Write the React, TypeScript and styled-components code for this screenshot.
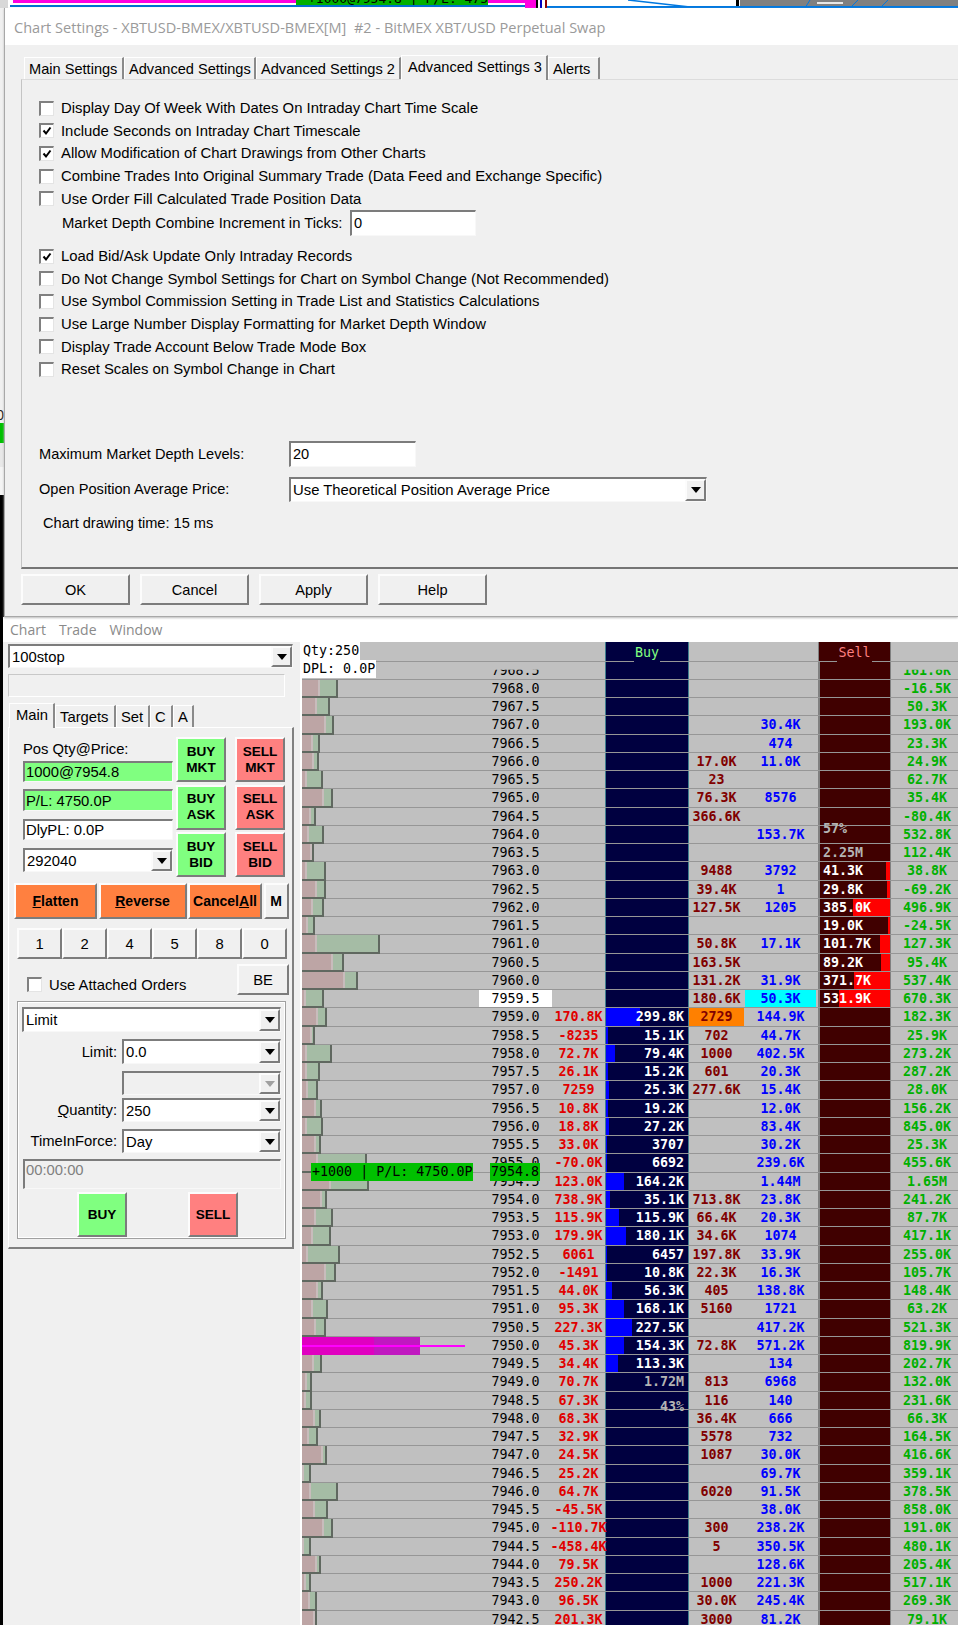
import React from "react";
import styled, { createGlobalStyle } from "styled-components";

const Global = createGlobalStyle`
  html, body { margin: 0; padding: 0; background: #fff; }
  * { box-sizing: border-box; }
  body { font-family: "Liberation Sans", Arial, sans-serif; font-size: 14.6px; color: #000; }
`;

const raised = `
  background: #f0f0f0;
  border-top: 2px solid #fcfcfc;
  border-left: 2px solid #fcfcfc;
  border-right: 2px solid #7c7c7c;
  border-bottom: 2px solid #7c7c7c;
`;
const sunken = `
  background: #fff;
  border-top: 2px solid #7c7c7c;
  border-left: 2px solid #7c7c7c;
  border-right: 1px solid #f8f8f8;
  border-bottom: 1px solid #f8f8f8;
`;

const Page = styled.div`
  width: 958px;
  height: 1625px;
  overflow: hidden;
  background: #fff;
`;
const TopStrip = styled.svg`
  display: block;
  width: 958px;
  height: 8px;
`;
const DialogRow = styled.div`
  display: flex;
  height: 609px;
`;
const Gutter = styled.div`
  width: 4px;
  display: flex;
  flex-direction: column;
  flex: none;
  overflow: hidden;
`;
const GutterSeg = styled.div<{ $h: number; $bg: string }>`
  height: ${(p) => p.$h}px;
  background: ${(p) => p.$bg};
  display: flex;
  align-items: flex-end;
  justify-content: flex-end;
  font-size: 14px;
  line-height: 16px;
  color: #222;
`;
const Dialog = styled.div`
  flex: 1;
  min-width: 0;
  background: #f0f0f0;
  border-left: 1px solid #a8a8a8;
  border-bottom: 1px solid #a8a8a8;
  box-shadow: 0 1px 2px #bbb;
  display: flex;
  flex-direction: column;
`;
const TitleBar = styled.div`
  height: 37px;
  background: #fff;
  display: flex;
  align-items: center;
  padding-left: 9px;
  font-family: "Open Sans", sans-serif;
  font-size: 14.55px;
  color: #9a9a9a;
  white-space: pre;
`;
const DialogBody = styled.div`
  padding: 10px 0 0 16px;
`;
const TabStrip = styled.div`
  display: flex;
  align-items: flex-end;
  height: 24px;
  padding-left: 3px;
`;
const Tab = styled.div<{ $w: number; $on?: boolean; $h?: number }>`
  width: ${(p) => p.$w}px;
  height: ${(p) => p.$h ?? (p.$on ? 25 : 22)}px;
  margin-bottom: ${(p) => (p.$on ? -1 : 0)}px;
  background: #f0f0f0;
  border-top: 1px solid #fff;
  border-left: 1px solid #fff;
  border-right: 2px solid #8a8a8a;
  display: flex;
  align-items: ${(p) => (p.$on ? "flex-start" : "center")};
  padding: ${(p) => (p.$on ? "3px 0 0 6px" : "0 0 0 4px")};
  white-space: nowrap;
  position: relative;
  z-index: ${(p) => (p.$on ? 1 : 0)};
`;
const Panel = styled.div`
  height: 490px;
  border-top: 1px solid #dcdcdc;
  border-left: 1px solid #c4c4c4;
  border-bottom: 2px solid #757575;
  padding: 17px 0 0 17px;
  display: flex;
  flex-direction: column;
`;
const CheckGroup = styled.div<{ $top?: number }>`
  margin-top: ${(p) => p.$top ?? 0}px;
  display: flex;
  flex-direction: column;
`;
const CheckRow = styled.label`
  height: 22.6px;
  display: flex;
  align-items: center;
  gap: 7px;
  white-space: nowrap;
  font-size: 14.85px;
`;
const Box = styled.span`
  width: 15px;
  height: 15px;
  flex: none;
  background: #fff;
  border-top: 2px solid #808080;
  border-left: 2px solid #808080;
  border-right: 1px solid #e4e4e4;
  border-bottom: 1px solid #e4e4e4;
  display: flex;
  align-items: center;
  justify-content: center;
`;
const FormRow = styled.div<{ $label: number; $top?: number; $pad?: number }>`
  display: grid;
  grid-template-columns: ${(p) => p.$label}px max-content;
  align-items: center;
  margin-top: ${(p) => p.$top ?? 0}px;
  padding-left: ${(p) => p.$pad ?? 0}px;
`;
const WideLabel = styled.span`
  font-size: 14.85px;
`;
const TextBox = styled.div<{ $w: number; $h: number }>`
  ${sunken}
  width: ${(p) => p.$w}px;
  height: ${(p) => p.$h}px;
  display: flex;
  align-items: center;
  padding-left: 2px;
`;
const Note = styled.div`
  margin: 13px 0 0 4px;
  line-height: 17px;
`;
const ButtonBar = styled.div`
  display: flex;
  gap: 10px;
  margin-top: 5px;
`;
const DialogButton = styled.div`
  ${raised}
  width: 109px;
  height: 31px;
  display: flex;
  align-items: center;
  justify-content: center;
`;
const Combo = styled.div<{ $w: number; $h?: number; $off?: boolean; $top?: number }>`
  ${sunken}
  width: ${(p) => p.$w}px;
  height: ${(p) => p.$h ?? 24}px;
  margin-top: ${(p) => p.$top ?? 0}px;
  background: ${(p) => (p.$off ? "#f0f0f0" : "#fff")};
  display: flex;
  align-items: center;
  justify-content: space-between;
  padding-left: 2px;
`;
const Arrow = styled.span<{ $off?: boolean }>`
  ${raised}
  width: 21px;
  height: 100%;
  flex: none;
  display: flex;
  align-items: center;
  justify-content: center;
  &::after {
    content: "";
    border-left: 5px solid transparent;
    border-right: 5px solid transparent;
    border-top: 6px solid ${(p) => (p.$off ? "#a0a0a0" : "#000")};
  }
`;
const Lower = styled.div`
  border-left: 3px solid #000;
  height: 1008px;
  background: #fff;
`;
const MenuBar = styled.div`
  height: 25px;
  display: flex;
  align-items: center;
  padding: 0 0 0 7px;
  gap: 13px;
  font-family: "Open Sans", sans-serif;
  font-size: 14px;
  color: #8a8a8a;
`;
const Main = styled.div`
  display: flex;
  height: 983px;
`;
const SidePanel = styled.div`
  width: 297px;
  flex: none;
  background: #f0f0f0;
  padding: 2px 0 0 5px;
  font-size: 14.8px;
`;
const ReadBox = styled.div`
  width: 277px;
  height: 23px;
  margin-top: 6px;
  background: #f0f0f0;
  border: 1px solid #c8c8c8;
  border-right-color: #fff;
  border-bottom-color: #fff;
`;
const SideTabs = styled.div`
  display: flex;
  align-items: flex-end;
  height: 25px;
  margin: 5px 0 0 1px;
`;
const SidePane = styled.div`
  width: 286px;
  height: 522px;
  border-top: 1px solid #fff;
  border-left: 1px solid #fff;
  border-right: 2px solid #808080;
  border-bottom: 2px solid #808080;
  padding-top: 9px;
`;
const TopBlock = styled.div`
  display: flex;
  padding-left: 14px;
`;
const FieldColumn = styled.div`
  width: 150px;
  margin-right: 3px;
  display: flex;
  flex-direction: column;
`;
const PosLabel = styled.div`
  height: 24px;
  display: flex;
  align-items: center;
`;
const StatusBox = styled.div<{ $bg?: string; $h: number; $top?: number }>`
  ${sunken}
  height: ${(p) => p.$h}px;
  margin-top: ${(p) => p.$top ?? 0}px;
  background: ${(p) => p.$bg ?? "#fff"};
  display: flex;
  align-items: center;
  padding-left: 1px;
`;
const TradeColumn = styled.div<{ $gap?: number }>`
  display: flex;
  flex-direction: column;
  gap: 2.5px;
  margin-left: ${(p) => p.$gap ?? 0}px;
`;
const TradeButton = styled.div<{ $bg: string }>`
  ${raised}
  background: ${(p) => p.$bg};
  width: 50px;
  height: 45px;
  display: flex;
  align-items: center;
  justify-content: center;
  text-align: center;
  font-weight: bold;
  font-size: 13.6px;
  line-height: 16px;
`;
const ActionRow = styled.div`
  display: grid;
  grid-template-columns: 83px 88px 74px 25px;
  column-gap: 1.5px;
  margin: 6px 0 0 5px;
  height: 36px;
`;
const ActionButton = styled.div<{ $plain?: boolean }>`
  ${raised}
  background: ${(p) => (p.$plain ? "#f0f0f0" : "#ff8040")};
  display: flex;
  align-items: center;
  justify-content: center;
  font-weight: bold;
  font-size: 14px;
  white-space: nowrap;
`;
const NumberRow = styled.div`
  display: grid;
  grid-template-columns: repeat(6, 45px);
  margin: 9px 0 0 8px;
  height: 31px;
`;
const NumberButton = styled.div`
  ${raised}
  display: flex;
  align-items: center;
  justify-content: center;
`;
const AttachRow = styled.div`
  display: flex;
  height: 31px;
  margin: 5px 3px 0 18px;
`;
const AttachLabel = styled.label`
  display: flex;
  align-items: center;
  gap: 7px;
  height: 15px;
  margin-top: 13px;
  white-space: nowrap;
`;
const BeButton = styled.div`
  ${raised}
  width: 52px;
  height: 31px;
  margin-left: auto;
  display: flex;
  align-items: center;
  justify-content: center;
`;
const OrderGroup = styled.div`
  width: 269px;
  height: 238px;
  margin: 6px 0 0 8px;
  border: 1px solid #a0a0a0;
  box-shadow: 0 0 0 1px #fff inset;
  padding: 5px 4px 0 4px;
  display: flex;
  flex-direction: column;
`;
const OrderRow = styled.div<{ $top: number }>`
  display: grid;
  grid-template-columns: 95px 159px;
  column-gap: 5px;
  align-items: center;
  margin-top: ${(p) => p.$top}px;
`;
const OrderLabel = styled.div`
  text-align: right;
`;
const TimeBox = styled.div`
  ${sunken}
  background: #f0f0f0;
  color: #808080;
  width: 258px;
  height: 30px;
  margin: 6px 0 0 1px;
  padding: 1px 0 0 1px;
`;
const OrderButtons = styled.div`
  display: flex;
  gap: 61px;
  margin: 3px 0 0 55px;
`;
const Chart = styled.div`
  position: relative;
  margin-left: 2px;
  flex: 1;
  min-width: 0;
  background: #c0c0c0;
  overflow: hidden;
  font-family: "DejaVu Sans Mono", monospace;
  font-size: 13.33px;
`;
const Columns = `
  display: grid;
  grid-template-columns: 177px 73px 53px 84px 56px 73px 73px 67px;
`;
const HeadRow = styled.div`
  ${Columns}
  height: 19.5px;
  border-bottom: 1px solid #969696;
`;
const HeadCell = styled.div<{ $bg?: string; $left?: string; $right?: string }>`
  background: ${(p) => p.$bg ?? "transparent"};
  border-left: ${(p) => (p.$left ? `1px solid ${p.$left}` : "none")};
  border-right: ${(p) => (p.$right ? `1px solid ${p.$right}` : "none")};
  display: flex;
  justify-content: center;
  align-items: flex-end;
`;
const HeadLabel = styled.span<{ $bg: string; $c: string }>`
  background: ${(p) => p.$bg};
  color: ${(p) => p.$c};
  padding: 0 1px;
  line-height: 19px;
  margin-bottom: -1px;
  height: 19px;
  position: relative;
`;
const Corner = styled.div<{ $top: number }>`
  position: absolute;
  left: 0;
  top: ${(p) => p.$top}px;
  height: 18px;
  line-height: 17px;
  padding: 0 1px;
  background: #fff;
  white-space: pre;
  z-index: 3;
`;
const Row = styled.div`
  ${Columns}
  height: 18.25px;
  border-bottom: 1px solid #969696;
`;
const Cell = styled.div<{ $c?: string; $bg?: string; $bold?: boolean; $align?: string; $pad?: string; $mr?: number; $left?: string; $right?: string }>`
  position: relative;
  color: ${(p) => p.$c ?? "#000"};
  background: ${(p) => p.$bg ?? "transparent"};
  font-weight: ${(p) => (p.$bold ? "bold" : "normal")};
  display: flex;
  align-items: center;
  justify-content: ${(p) => p.$align ?? "center"};
  padding: ${(p) => p.$pad ?? "0"};
  margin-right: ${(p) => p.$mr ?? 0}px;
  border-left: ${(p) => (p.$left ? `${p.$left}` : "none")};
  border-right: ${(p) => (p.$right ? `${p.$right}` : "none")};
  white-space: nowrap;
  min-width: 0;
`;
const CellText = styled.span<{ $clip?: boolean; $shift?: number; $grey?: boolean }>`
  position: relative;
  z-index: 1;
  clip-path: ${(p) => (p.$clip ? "inset(7px 0 0 0)" : "none")};
  transform: translateY(${(p) => p.$shift ?? 0}px);
  color: ${(p) => (p.$grey ? "#b4b4b4" : "inherit")};
`;
const Fill = styled.div<{ $c: string; $side: "left" | "right" }>`
  position: absolute;
  top: 0;
  bottom: 0;
  ${(p) => p.$side}: 0;
  background: ${(p) => p.$c};
`;
const Bar = styled.div`
  height: calc(100% + 1px);
  display: flex;
  border-right: 2px solid #606860;
  border-bottom: 2px solid #606860;
`;
const BarPink = styled.div`
  background: #bda5a5;
  border-right: 2px solid #c8bcbc;
  flex: none;
`;
const BarGreen = styled.div`
  background: #a5bca5;
  flex: 1;
  min-width: 0;
`;
const POCBar = styled.div`
  height: calc(100% + 1px);
  display: flex;
  width: 118px;
  background: #c018c0;
`;
const POCPart = styled.div`
  width: 72px;
  background: #e000c0;
`;
const POCLine = styled.div`
  position: absolute;
  left: -2px;
  top: 8px;
  width: 165px;
  height: 2px;
  background: #ff00ff;
`;
const CellInner = styled.div`
  width: 100%;
  height: 100%;
  display: flex;
  justify-content: flex-start;
`;
const PositionTag = styled.div<{ $left: number; $w: number }>`
  position: absolute;
  top: 521px;
  left: ${(p) => p.$left}px;
  width: ${(p) => p.$w}px;
  height: 18px;
  line-height: 18px;
  background: #00c000;
  color: #000;
  padding-left: 1px;
  white-space: pre;
  z-index: 4;
`;

const RAW = `7968.5||||||161.8K|0|0
7968.0||||||-16.5K|18|36
7967.5||||||50.3K|15|28
7967.0||||30.4K||193.0K|24|32
7966.5||||474||23.3K|11|18
7966.0|||17.0K|11.0K||24.9K|12|17
7965.5|||23|||62.7K|5|21
7965.0|||76.3K|8576||35.4K|22|31
7964.5|||366.6K|||-80.4K|9|14
7964.0||||153.7K|57%|532.8K|7|22
7963.5|||||2.25M|112.4K|10|12
7963.0|||9488|3792|41.3K|38.8K|5|24|0|4
7962.5|||39.4K|1|29.8K|-69.2K|15|24|0|3
7962.0|||127.5K|1205|385.0K|496.9K|11|22|0|37
7961.5|||||19.0K|-24.5K|6|13|0|2
7961.0|||50.8K|17.1K|101.7K|127.3K|15|78|0|10
7960.5|||163.5K||89.2K|95.4K|31|42|0|9
7960.0|||131.2K|31.9K|371.7K|537.4K|43|56|0|36
7959.5|||180.6K|50.3K|531.9K|670.3K|4|22|0|51
7959.0|170.8K|299.8K|2729|144.9K||182.3K|16|25|34
7958.5|-8235|15.1K|702|44.7K||25.9K|10|13|2
7958.0|72.7K|79.4K|1000|402.5K||273.2K|5|30|9
7957.5|26.1K|15.2K|601|20.3K||287.2K|5|18|2
7957.0|7259|25.3K|277.6K|15.4K||28.0K|6|16|3
7956.5|10.8K|19.2K||12.0K||156.2K|14|20|2
7956.0|18.8K|27.2K||83.4K||845.0K|5|21|3
7955.5|33.0K|3707||30.2K||25.3K|14|19|1
7955.0|-70.0K|6692||239.6K||455.6K|16|65|1
7954.5|123.0K|164.2K||1.44M||1.65M|29|67|18
7954.0|738.9K|35.1K|713.8K|23.8K||241.2K|20|25|4
7953.5|115.9K|115.9K|66.4K|20.3K||87.7K|14|31|13
7953.0|179.9K|180.1K|34.6K|1074||417.1K|11|29|20
7952.5|6061|6457|197.8K|33.9K||255.0K|6|38|1
7952.0|-1491|10.8K|22.3K|16.3K||105.7K|24|34|1
7951.5|44.0K|56.3K|405|138.8K||148.4K|16|21|6
7951.0|95.3K|168.1K|5160|1721||63.2K|11|26|18
7950.5|227.3K|227.5K||417.2K||521.3K|14|24|26
7950.0|45.3K|154.3K|72.8K|571.2K||819.9K|72|118|18
7949.5|34.4K|113.3K||134||202.7K|12|20|12
7949.0|70.7K|1.72M|813|6968||132.0K|5|10
7948.5|67.3K|43%|116|140||231.6K|4|10
7948.0|68.3K||36.4K|666||66.3K|13|19
7947.5|32.9K||5578|732||164.5K|7|16
7947.0|24.5K||1087|30.0K||416.6K|21|25
7946.5|25.2K|||69.7K||359.1K|2|9
7946.0|64.7K||6020|91.5K||378.5K|9|36
7945.5|-45.5K|||38.0K||858.0K|13|26
7945.0|-110.7K||300|238.2K||191.0K|22|31
7944.5|-458.4K||5|350.5K||480.1K|1|9
7944.0|79.5K|||128.6K||205.4K|15|19
7943.5|250.2K||1000|221.3K||517.1K|4|9
7943.0|96.5K||30.0K|245.4K||269.3K|8|15
7942.5|201.3K||3000|81.2K||79.1K|13|15`;

const ROWS = RAW.split("\n").map((l) => {
  const f = l.split("|");
  return {
    price: f[0], red: f[1], buy: f[2], dark: f[3], blue: f[4], sell: f[5], green: f[6],
    pink: +f[7], total: +f[8], buyFill: +(f[9] || 0), sellFill: +(f[10] || 0),
  };
});

const Check = ({ on }: { on?: boolean }) => (
  <Box>
    {on && (
      <svg width="10" height="10" viewBox="0 0 10 10">
        <path d="M1.5 4.5 L4 7.5 L8.5 1.5" fill="none" stroke="#000" strokeWidth="2" />
      </svg>
    )}
  </Box>
);

const CheckLine = ({ on, children }: { on?: boolean; children: React.ReactNode }) => (
  <CheckRow>
    <Check on={on} />
    {children}
  </CheckRow>
);

const LADDER_NAVY = "#000040";
const LADDER_MAROON = "#400000";
const EDGE_BUY = "1px solid #3f7f8f";
const EDGE_SELL = "2px solid #808080";

const LadderRow = ({ r, i }: { r: (typeof ROWS)[number]; i: number }) => {
  const isPoc = r.price === "7950.0";
  const isLast = r.price === "7959.5";
  const greySell = r.sell === "57%" || r.sell === "2.25M";
  const greyBuy = r.buy === "1.72M" || r.buy === "43%";
  return (
    <Row>
      <Cell>
        <CellInner>
          {isPoc ? (
            <POCBar>
              <POCPart />
              <POCLine />
            </POCBar>
          ) : r.total > 0 ? (
            <Bar style={{ width: r.total }}>
              <BarPink style={{ width: r.pink }} />
              <BarGreen />
            </Bar>
          ) : null}
        </CellInner>
      </Cell>
      <Cell $bg={isLast ? "#fff" : undefined}>
        <CellText $clip={i === 0}>{r.price}</CellText>
      </Cell>
      <Cell $c="#e00000" $bold>
        <CellText>{r.red}</CellText>
      </Cell>
      <Cell $c="#fff" $bold $bg={LADDER_NAVY} $align="flex-end" $pad="0 4px 0 0" $left={EDGE_BUY} $right={EDGE_BUY}>
        {r.buyFill > 0 && <Fill $c="#0000ff" $side="left" style={{ width: r.buyFill }} />}
        <CellText $grey={greyBuy} $shift={r.buy === "43%" ? 6 : 0}>{r.buy}</CellText>
      </Cell>
      <Cell $c="#800000" $bold $bg={r.dark === "2729" ? "#ff8000" : undefined} $mr={1}>
        <CellText>{r.dark}</CellText>
      </Cell>
      <Cell $c="#0000ff" $bold $bg={isLast ? "#00ffff" : undefined} $mr={2}>
        <CellText>{r.blue}</CellText>
      </Cell>
      <Cell $c="#fff" $bold $bg={LADDER_MAROON} $align="flex-start" $pad="0 0 0 3px" $left={EDGE_SELL} $right="1px solid #808080">
        {r.sellFill > 0 && <Fill $c="#ff0000" $side="right" style={{ width: r.sellFill }} />}
        <CellText $grey={greySell} $shift={r.sell === "57%" ? -6 : 0}>{r.sell}</CellText>
      </Cell>
      <Cell $c="#00b000" $bold $pad="0 0 0 5px">
        <CellText $clip={i === 0}>{r.green}</CellText>
      </Cell>
    </Row>
  );
};

export default function App() {
  return (
    <Page>
      <Global />
      <TopStrip viewBox="0 0 958 8">
        <rect width="958" height="8" fill="#fff" />
        <rect x="0" width="8" height="8" fill="#d8d8d8" />
        <rect x="13" width="283" height="3" fill="#ff00e0" />
        <rect x="296" width="192" height="6" fill="#00b000" />
        <text x="308" y="3" fontFamily="DejaVu Sans Mono" fontSize="13" fill="#000">+1000@7954.8 | P/L: 4750.0P</text>
        <rect x="488" width="37" height="3" fill="#ff00e0" />
        <rect x="10" y="5" width="515" height="2" fill="#0070d0" />
        <rect x="525" width="12" height="8" fill="#ff00e0" />
        <rect x="536" width="2" height="8" fill="#000" />
        <rect x="540" width="2" height="8" fill="#0000c0" />
        <rect x="545" width="2" height="8" fill="#900000" />
        <rect x="740" width="218" height="7" fill="#808080" />
        <rect x="736" width="3" height="8" fill="#000" />
        <rect x="547" y="6" width="411" height="2" fill="#0078e0" />
        <path d="M628 0 L690 7" stroke="#0078e0" strokeWidth="1.5" fill="none" />
        <path d="M805 8 L810 0 M850 8 L858 0 M880 8 L888 0" stroke="#0078e0" strokeWidth="1" fill="none" />
        <rect x="817" y="2" width="26" height="2" fill="#e8e8e8" />
      </TopStrip>
      <DialogRow>
        <Gutter>
          <GutterSeg $h={415} $bg="#f0f0f0">0</GutterSeg>
          <GutterSeg $h={20} $bg="#00c000" />
          <GutterSeg $h={24} $bg="#e8e8e8" />
          <GutterSeg $h={28} $bg="#f4f4f4" />
          <GutterSeg $h={122} $bg="#000" />
        </Gutter>
        <Dialog>
          <TitleBar>Chart Settings - XBTUSD-BMEX/XBTUSD-BMEX[M]  #2 - BitMEX XBT/USD Perpetual Swap</TitleBar>
          <DialogBody>
            <TabStrip>
              <Tab $w={100}>Main Settings</Tab>
              <Tab $w={132}>Advanced Settings</Tab>
              <Tab $w={145}>Advanced Settings 2</Tab>
              <Tab $w={147} $on>Advanced Settings 3</Tab>
              <Tab $w={52}>Alerts</Tab>
            </TabStrip>
            <Panel>
              <CheckGroup>
                <CheckLine>Display Day Of Week With Dates On Intraday Chart Time Scale</CheckLine>
                <CheckLine on>Include Seconds on Intraday Chart Timescale</CheckLine>
                <CheckLine on>Allow Modification of Chart Drawings from Other Charts</CheckLine>
                <CheckLine>Combine Trades Into Original Summary Trade (Data Feed and Exchange Specific)</CheckLine>
                <CheckLine>Use Order Fill Calculated Trade Position Data</CheckLine>
              </CheckGroup>
              <FormRow $label={288} $pad={23}>
                <WideLabel>Market Depth Combine Increment in Ticks:</WideLabel>
                <TextBox $w={126} $h={26}>0</TextBox>
              </FormRow>
              <CheckGroup $top={9}>
                <CheckLine on>Load Bid/Ask Update Only Intraday Records</CheckLine>
                <CheckLine>Do Not Change Symbol Settings for Chart on Symbol Change (Not Recommended)</CheckLine>
                <CheckLine>Use Symbol Commission Setting in Trade List and Statistics Calculations</CheckLine>
                <CheckLine>Use Large Number Display Formatting for Market Depth Window</CheckLine>
                <CheckLine>Display Trade Account Below Trade Mode Box</CheckLine>
                <CheckLine>Reset Scales on Symbol Change in Chart</CheckLine>
              </CheckGroup>
              <FormRow $label={250} $top={60}>
                <span>Maximum Market Depth Levels:</span>
                <TextBox $w={127} $h={26}>20</TextBox>
              </FormRow>
              <FormRow $label={250} $top={10}>
                <span>Open Position Average Price:</span>
                <Combo $w={418} $h={25}>
                  <WideLabel>Use Theoretical Position Average Price</WideLabel>
                  <Arrow />
                </Combo>
              </FormRow>
              <Note>Chart drawing time: 15 ms</Note>
            </Panel>
            <ButtonBar>
              <DialogButton>OK</DialogButton>
              <DialogButton>Cancel</DialogButton>
              <DialogButton>Apply</DialogButton>
              <DialogButton>Help</DialogButton>
            </ButtonBar>
          </DialogBody>
        </Dialog>
      </DialogRow>
      <Lower>
        <MenuBar>
          <span>Chart</span>
          <span>Trade</span>
          <span>Window</span>
        </MenuBar>
        <Main>
          <SidePanel>
            <Combo $w={285}>
              <span>100stop</span>
              <Arrow />
            </Combo>
            <ReadBox />
            <SideTabs>
              <Tab $w={46} $on>Main</Tab>
              <Tab $w={61}>Targets</Tab>
              <Tab $w={34}>Set</Tab>
              <Tab $w={23}>C</Tab>
              <Tab $w={21}>A</Tab>
            </SideTabs>
            <SidePane>
              <TopBlock>
                <FieldColumn>
                  <PosLabel>Pos Qty@Price:</PosLabel>
                  <StatusBox $bg="#80ff80" $h={21}>1000@7954.8</StatusBox>
                  <StatusBox $bg="#80ff80" $h={22} $top={7}>P/L: 4750.0P</StatusBox>
                  <StatusBox $h={21} $top={8}>DlyPL: 0.0P</StatusBox>
                  <Combo $w={150} $top={8}>
                    <span>292040</span>
                    <Arrow />
                  </Combo>
                </FieldColumn>
                <TradeColumn>
                  <TradeButton $bg="#80ff80">BUY<br />MKT</TradeButton>
                  <TradeButton $bg="#80ff80">BUY<br />ASK</TradeButton>
                  <TradeButton $bg="#80ff80">BUY<br />BID</TradeButton>
                </TradeColumn>
                <TradeColumn $gap={9}>
                  <TradeButton $bg="#ff8080">SELL<br />MKT</TradeButton>
                  <TradeButton $bg="#ff8080">SELL<br />ASK</TradeButton>
                  <TradeButton $bg="#ff8080">SELL<br />BID</TradeButton>
                </TradeColumn>
              </TopBlock>
              <ActionRow>
                <ActionButton><u>F</u>latten</ActionButton>
                <ActionButton><u>R</u>everse</ActionButton>
                <ActionButton>Cancel<u>A</u>ll</ActionButton>
                <ActionButton $plain>M</ActionButton>
              </ActionRow>
              <NumberRow>
                {["1", "2", "4", "5", "8", "0"].map((n) => (
                  <NumberButton key={n}>{n}</NumberButton>
                ))}
              </NumberRow>
              <AttachRow>
                <AttachLabel>
                  <Check />
                  Use Attached Orders
                </AttachLabel>
                <BeButton>BE</BeButton>
              </AttachRow>
              <OrderGroup>
                <Combo $w={259} $h={25}>
                  <span>Limit</span>
                  <Arrow />
                </Combo>
                <OrderRow $top={7}>
                  <OrderLabel>Limit:</OrderLabel>
                  <Combo $w={159} $h={25}><span>0.0</span><Arrow /></Combo>
                </OrderRow>
                <OrderRow $top={7}>
                  <span />
                  <Combo $w={159} $off><span /><Arrow $off /></Combo>
                </OrderRow>
                <OrderRow $top={3}>
                  <OrderLabel><u>Q</u>uantity:</OrderLabel>
                  <Combo $w={159}><span>250</span><Arrow /></Combo>
                </OrderRow>
                <OrderRow $top={7}>
                  <OrderLabel>TimeInForce:</OrderLabel>
                  <Combo $w={159}><span>Day</span><Arrow /></Combo>
                </OrderRow>
                <TimeBox>00:00:00</TimeBox>
                <OrderButtons>
                  <TradeButton $bg="#80ff80">BUY</TradeButton>
                  <TradeButton $bg="#ff8080">SELL</TradeButton>
                </OrderButtons>
              </OrderGroup>
            </SidePane>
          </SidePanel>
          <Chart>
            <Corner $top={0}>Qty:250</Corner>
            <Corner $top={18}>DPL: 0.0P</Corner>
            <HeadRow>
              <HeadCell />
              <HeadCell />
              <HeadCell />
              <HeadCell $bg={LADDER_NAVY} $left="#3f7f8f" $right="#3f7f8f">
                <HeadLabel $bg={LADDER_NAVY} $c="#80ff80">Buy</HeadLabel>
              </HeadCell>
              <HeadCell />
              <HeadCell />
              <HeadCell $bg={LADDER_MAROON} $left="#808080" $right="#808080">
                <HeadLabel $bg={LADDER_MAROON} $c="#ff8080">Sell</HeadLabel>
              </HeadCell>
              <HeadCell />
            </HeadRow>
            {ROWS.map((r, i) => (
              <LadderRow key={r.price} r={r} i={i} />
            ))}
            <PositionTag $left={9} $w={162}>+1000 | P/L: 4750.0P</PositionTag>
            <PositionTag $left={188} $w={50}>7954.8</PositionTag>
          </Chart>
        </Main>
      </Lower>
    </Page>
  );
}
